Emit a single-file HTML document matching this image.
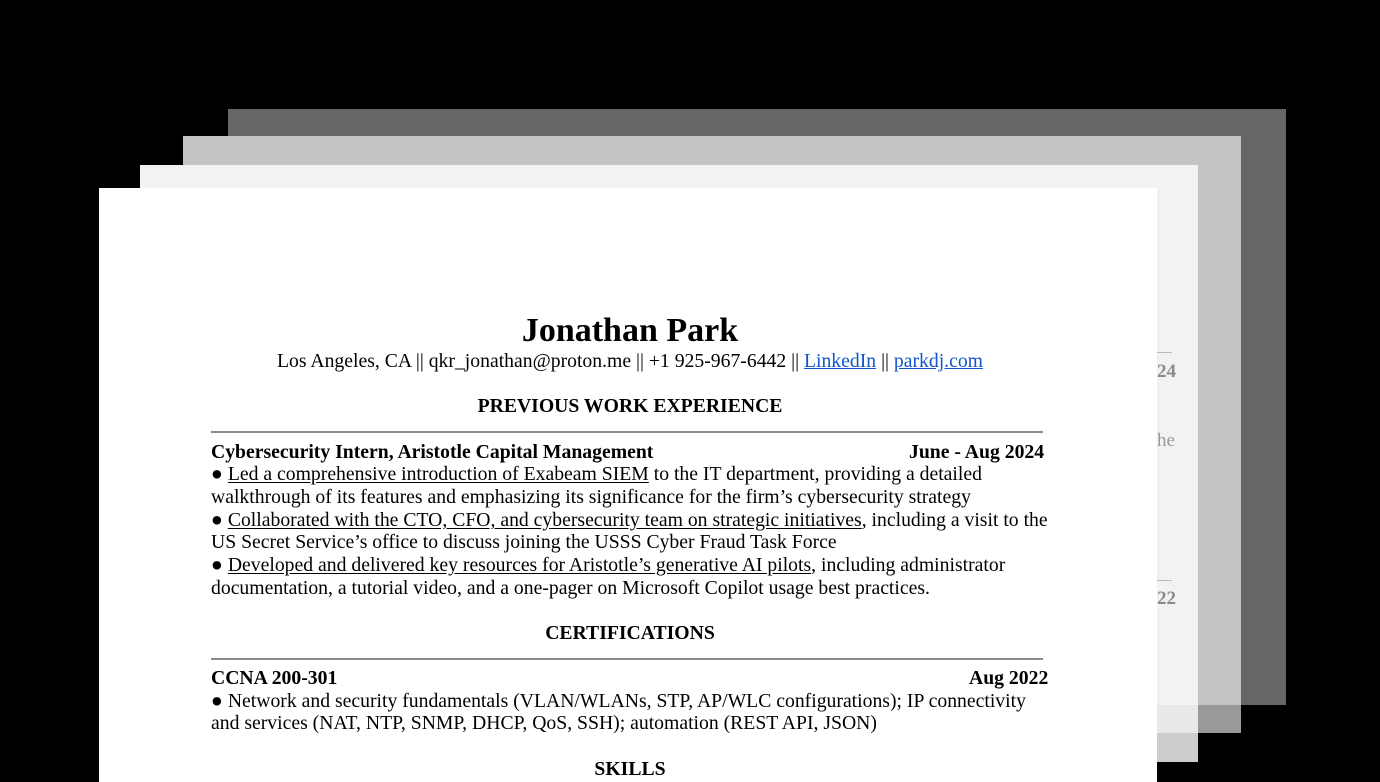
<!DOCTYPE html>
<html><head><meta charset="utf-8"><style>
body{margin:0;width:1380px;height:782px;background:#000;position:relative;overflow:hidden;font-family:"Liberation Serif",serif;color:#000}
.r{position:absolute}
.t{position:absolute;font-size:19.7px;white-space:nowrap;line-height:22px}
.b{font-weight:bold}
.c{left:99px;width:1062px;text-align:center}
u{text-decoration:underline;text-underline-offset:2px}
a{color:#1155cc;text-decoration:underline}
.hr{position:absolute;left:211px;width:832px;height:2px;background:#8a8a8a}
.g{position:absolute;color:#8a8a8a;font-size:19px;font-weight:bold}
</style></head><body>
<div class="r" style="left:228px;top:109px;width:1058px;height:596px;background:#666"></div>
<div class="r" style="left:183px;top:136px;width:1058px;height:597px;background:#c3c3c3"></div>
<div class="r" style="left:1198px;top:705px;width:43px;height:28px;background:#999"></div>
<div class="r" style="left:140px;top:165px;width:1058px;height:597px;background:#f2f2f2"></div>
<div class="r" style="left:1157px;top:705px;width:41px;height:28px;background:#e8e8e8"></div>
<div class="r" style="left:1157px;top:733px;width:41px;height:29px;background:#ccc"></div>
<div class="r" style="left:1157px;top:352px;width:15px;height:1px;background:#bbb"></div>
<div class="g" style="left:1157px;top:361px">24</div>
<div class="g" style="left:1157px;top:430px;font-weight:normal;color:#999">he</div>
<div class="r" style="left:1157px;top:580px;width:15px;height:1px;background:#bbb"></div>
<div class="g" style="left:1157px;top:588px">22</div>
<div class="r" style="left:99px;top:188px;width:1058px;height:594px;background:#fff"></div>

<div class="t b c" style="top:312px;font-size:34px;line-height:38px;">Jonathan Park</div>
<div class="t c" style="top:350px">Los Angeles, CA || qkr_jonathan@proton.me || +1 925-967-6442 || <a>LinkedIn</a> || <a>parkdj.com</a></div>
<div class="t b c" style="top:395px">PREVIOUS WORK EXPERIENCE</div>
<div class="hr" style="top:431px"></div>
<div class="t b" style="left:211px;top:441px">Cybersecurity Intern, Aristotle Capital Management</div>
<div class="t b" style="left:909px;top:441px">June - Aug 2024</div>
<div class="t" style="left:211px;top:463px">● <u>Led a comprehensive introduction of Exabeam SIEM</u> to the IT department, providing a detailed</div>
<div class="t" style="left:211px;top:486px">walkthrough of its features and emphasizing its significance for the firm’s cybersecurity strategy</div>
<div class="t" style="left:211px;top:509px">● <u>Collaborated with the CTO, CFO, and cybersecurity team on strategic initiatives</u>, including a visit to the</div>
<div class="t" style="left:211px;top:531px">US Secret Service’s office to discuss joining the USSS Cyber Fraud Task Force</div>
<div class="t" style="left:211px;top:554px">● <u>Developed and delivered key resources for Aristotle’s generative AI pilots</u>, including administrator</div>
<div class="t" style="left:211px;top:577px">documentation, a tutorial video, and a one-pager on Microsoft Copilot usage best practices.</div>
<div class="t b c" style="top:622px">CERTIFICATIONS</div>
<div class="hr" style="top:658px"></div>
<div class="t b" style="left:211px;top:667px">CCNA 200-301</div>
<div class="t b" style="left:969px;top:667px">Aug 2022</div>
<div class="t" style="left:211px;top:690px">● Network and security fundamentals (VLAN/WLANs, STP, AP/WLC configurations); IP connectivity</div>
<div class="t" style="left:211px;top:712px">and services (NAT, NTP, SNMP, DHCP, QoS, SSH); automation (REST API, JSON)</div>
<div class="t b c" style="top:758px">SKILLS</div>
</body></html>
